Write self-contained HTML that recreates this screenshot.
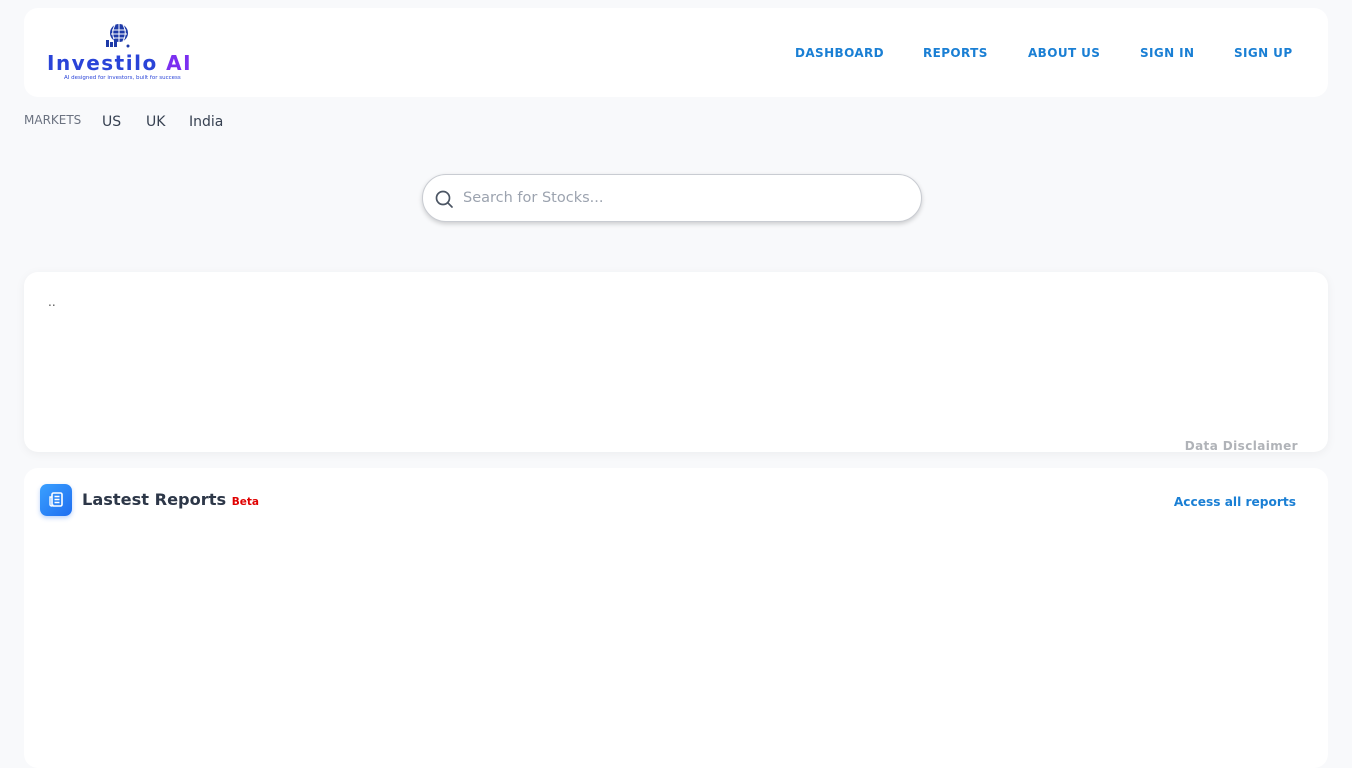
<!DOCTYPE html>
<html><head><meta charset="utf-8"><style>
*{box-sizing:border-box;margin:0;padding:0}
body{width:1352px;height:760px;overflow:hidden;background:#f8f9fb;font-family:"DejaVu Sans","Liberation Sans",sans-serif;position:relative}
.hdr{position:absolute;left:24px;top:8px;width:1304px;height:89px;background:#fff;border-radius:14px}
.nav a{position:absolute;top:46px;font-size:12px;font-weight:bold;color:#1a7fd4;letter-spacing:.4px;text-decoration:none}
.mk{position:absolute;top:113px;font-size:12px;color:#6b7280}
.m{position:absolute;top:114px;font-size:14px;color:#374151}
.search{position:absolute;left:422px;top:174px;width:500px;height:48px;border:1px solid #c9ccd2;border-radius:24px;background:#fff;box-shadow:0 2px 5px rgba(0,0,0,.18)}
.search span{position:absolute;left:40px;top:15px;font-size:14.5px;color:#9ca3af}
.card{position:absolute;left:24px;top:272px;width:1304px;height:180px;background:#fff;border-radius:14px;box-shadow:0 2px 10px rgba(0,0,0,.05)}
.card2{position:absolute;left:24px;top:468px;width:1304px;height:300px;background:#fff;border-radius:14px}
</style></head><body>
<div class="hdr">
 <svg style="position:absolute;left:80px;top:14px" width="28" height="28" viewBox="0 0 28 28"><circle cx="15" cy="11" r="9" fill="#1e3aa8"/><path d="M8 8h14M7 12h16M9 16h12M15 2v18M11 3c-3 5-3 11 0 16M19 3c3 5 3 11 0 16" stroke="#fff" stroke-width="1" fill="none"/><rect x="2" y="18" width="3" height="7" fill="#1e3aa8"/><rect x="6" y="20" width="3" height="5" fill="#1e3aa8"/><rect x="10" y="17" width="3" height="8" fill="#1e3aa8"/><circle cx="24" cy="24" r="1.5" fill="#1e3aa8"/></svg>
 <div style="position:absolute;left:23px;top:43px;font-size:20px;font-weight:bold;letter-spacing:1.5px;color:#2a44d8">Investilo <span style="color:#7b2ff0">AI</span></div>
 <div style="position:absolute;left:40px;top:67px;font-size:5.5px;color:#2a44d8">AI designed for investors, built for success</div>
</div>
<div class="nav">
 <a style="left:795px">DASHBOARD</a><a style="left:923px">REPORTS</a><a style="left:1028px">ABOUT US</a><a style="left:1140px">SIGN IN</a><a style="left:1234px">SIGN UP</a>
</div>
<div class="mk" style="left:24px">MARKETS</div>
<div class="m" style="left:102px">US</div><div class="m" style="left:146px">UK</div><div class="m" style="left:189px">India</div>
<div class="search">
 <svg style="position:absolute;left:11px;top:14px" width="20" height="20" viewBox="0 0 20 20"><circle cx="9" cy="9" r="6.5" stroke="#4b5563" stroke-width="1.7" fill="none"/><path d="M13.7 13.7L18 18" stroke="#4b5563" stroke-width="1.7" stroke-linecap="round"/></svg>
 <span>Search for Stocks...</span>
</div>
<div class="card">
 <div style="position:absolute;left:24px;top:23px;font-size:12px;color:#555">..</div>
 <div style="position:absolute;right:30px;top:167px;font-size:12px;font-weight:bold;color:#b0b3b8;letter-spacing:.4px">Data Disclaimer</div>
</div>
<div class="card2">
 <div style="position:absolute;left:16px;top:16px;width:32px;height:32px;border-radius:7px;background:linear-gradient(135deg,#3aa0ff,#1f6ef0);box-shadow:0 2px 5px rgba(30,110,240,.3)">
  <svg width="32" height="32" viewBox="0 0 32 32"><rect x="12" y="9" width="10" height="13" rx="1.5" stroke="#fff" stroke-width="1.6" fill="none"/><path d="M12 13h-2v7.5a1.5 1.5 0 0 0 3 0M14.5 12.5h5M14.5 15.5h5M14.5 18.5h5" stroke="#fff" stroke-width="1.4" fill="none"/></svg>
 </div>
 <div style="position:absolute;left:58px;top:22px;font-size:16.2px;font-weight:bold;color:#2d3748">Lastest Reports <span style="font-size:10.5px;color:#e00000">Beta</span></div>
 <div style="position:absolute;right:32px;top:27px;font-size:12.2px;font-weight:bold;color:#1a7fd4">Access all reports</div>
</div>
</body></html>
